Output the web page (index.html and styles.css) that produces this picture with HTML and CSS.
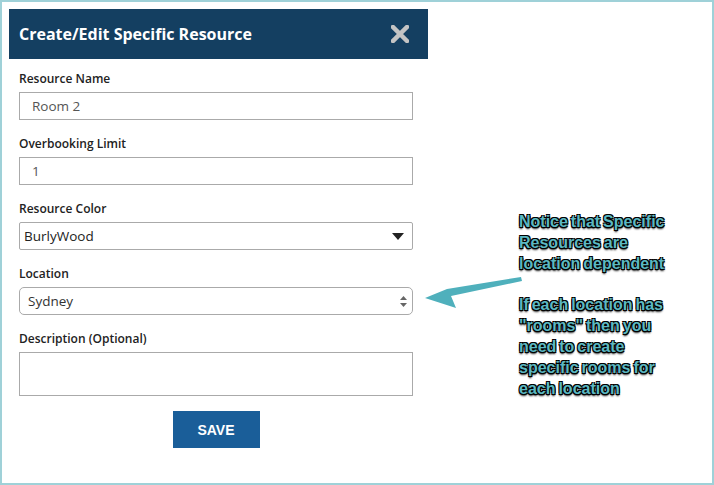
FILE: index.html
```html
<!DOCTYPE html>
<html>
  <head>
    <title>Create/Edit Specific Resource</title>
    <link rel="stylesheet" href="styles.css">
  </head>
  <body>
    <div id="frame">
      <div id="dialog">
        <div id="heading">
          <h1>Create/Edit Specific Resource</h1>
          <svg class="close" width="18" height="18" viewBox="0 0 18 18">
            <path d="M2 2 L16 16 M16 2 L2 16" stroke="#c4c4c4" stroke-width="4.5" stroke-linecap="square"/>
          </svg>
        </div>
        <div id="content">
          <div class="field">
            <label>Resource Name</label>
            <div class="input">Room 2</div>
          </div>
          <div class="field">
            <label>Overbooking Limit</label>
            <div class="input">1</div>
          </div>
          <div class="field">
            <label>Resource Color</label>
            <div class="select">
              <span>BurlyWood</span>
              <svg width="12" height="7" viewBox="0 0 12 7"><path d="M0 0 L12 0 L6 7 Z" fill="#222"/></svg>
            </div>
          </div>
          <div class="field">
            <label>Location</label>
            <div class="select rounded">
              <span>Sydney</span>
              <svg width="7" height="11" viewBox="0 0 7 11"><path d="M3.5 0 L7 4 L0 4 Z M0 7 L7 7 L3.5 11 Z" fill="#666"/></svg>
            </div>
          </div>
          <div class="field">
            <label>Description (Optional)</label>
            <div class="textarea"></div>
          </div>
          <div class="actions">
            <button>SAVE</button>
          </div>
        </div>
      </div>

      <div id="note">
        <svg class="arrow" width="100" height="40" viewBox="0 0 100 40">
          <path d="M22 12 L96 0 L97 4 L26 19 L31 31 L0 21 Z" fill="#4fb0bc"/>
        </svg>
        <p>Notice that Specific<br>Resources are<br>location dependent</p>
        <p>If each location has<br>"rooms" then you<br>need to create<br>specific rooms for<br>each location</p>
      </div>
    </div>
  </body>
</html>
```

FILE: styles.css
```css
body {
  margin: 0;
  background-color: white;
  font-family: "Open Sans", sans-serif;
}

#frame {
  box-sizing: border-box;
  width: 714px;
  height: 485px;
  border: 2px solid #9fd1d8;
  padding: 7px;
  display: flex;
  position: relative;
}

#dialog {
  width: 419px;
}

#heading {
  background-color: #143f61;
  height: 50px;
  display: flex;
  align-items: center;
  justify-content: space-between;
  padding: 0 19px 0 10px;
}

#heading h1 {
  margin: 0;
  color: white;
  font-size: 16px;
  font-weight: 700;
}

#content {
  padding: 11px 15px 0 10px;
}

.field {
  margin-bottom: 15px;
}

label {
  display: block;
  font-size: 12px;
  font-weight: 600;
  color: #222;
  line-height: 18px;
  margin-bottom: 4px;
}

.input,
.select,
.textarea {
  box-sizing: border-box;
  height: 28px;
  border: 1px solid #aaa;
  font-size: 13.5px;
  color: #555;
  display: flex;
  align-items: center;
  padding: 0 12px;
}

.select {
  justify-content: space-between;
  color: #222;
  padding: 0 8px 0 4px;
  border-radius: 2px;
}

.select.rounded {
  border-radius: 5px;
  padding: 0 5px 0 8px;
  color: #333;
}

.textarea {
  height: 44px;
}

.actions {
  display: flex;
  justify-content: center;
}

button {
  width: 87px;
  height: 37px;
  border: none;
  background-color: #1a5e99;
  color: white;
  font-family: "Liberation Sans", Arial, sans-serif;
  font-weight: 700;
  font-size: 14px;
}

#note {
  position: absolute;
  left: 412px;
  top: 210px;
}

.arrow {
  position: absolute;
  left: 11px;
  top: 65px;
}

#note p {
  margin: 0 0 21px 105px;
  font-family: "Liberation Sans", Arial, sans-serif;
  font-weight: 700;
  font-size: 16px;
  line-height: 20.8px;
  letter-spacing: 0;
  word-spacing: -1.5px;
  color: #5bb8c2;
  text-shadow: -1px -1px 0 #000, 1px -1px 0 #000, -1px 1px 0 #000,
    1px 1px 0 #000, 0 2px 2px #000;
}
```
